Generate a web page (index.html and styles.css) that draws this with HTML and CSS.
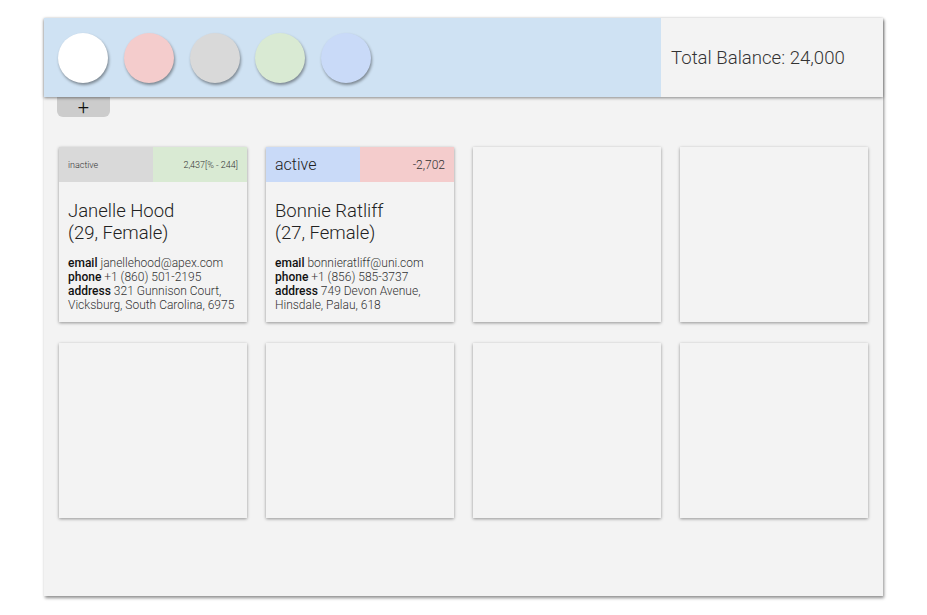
FILE: index.html
```html
<!DOCTYPE html>
<html>
<head>
<meta charset="utf-8">
<link rel="stylesheet" href="styles.css">
</head>
<body>
<div class="app">
  <header class="topbar">
    <div class="swatches">
      <div class="swatch white"></div>
      <div class="swatch red"></div>
      <div class="swatch gray"></div>
      <div class="swatch green"></div>
      <div class="swatch blue"></div>
    </div>
    <div class="total">Total Balance: 24,000</div>
  </header>
  <div class="addrow"><button class="add">+</button></div>
  <main class="grid">
    <div class="card">
      <div class="card-head">
        <div class="status gray small">inactive</div>
        <div class="bal green small">2,437[% - 244]</div>
      </div>
      <div class="card-body">
        <div class="name">Janelle Hood<br>(29, Female)</div>
        <div class="details">
          <b>email</b> janellehood@apex.com<br>
          <b>phone</b> +1 (860) 501-2195<br>
          <b>address</b> 321 Gunnison Court, Vicksburg, South Carolina, 6975
        </div>
      </div>
    </div>
    <div class="card">
      <div class="card-head">
        <div class="status blue big">active</div>
        <div class="bal red mid">-2,702</div>
      </div>
      <div class="card-body">
        <div class="name">Bonnie Ratliff<br>(27, Female)</div>
        <div class="details">
          <b>email</b> bonnieratliff@uni.com<br>
          <b>phone</b> +1 (856) 585-3737<br>
          <b>address</b> 749 Devon Avenue, Hinsdale, Palau, 618
        </div>
      </div>
    </div>
    <div class="card"></div>
    <div class="card"></div>
    <div class="card"></div>
    <div class="card"></div>
    <div class="card"></div>
    <div class="card"></div>
  </main>
</div>
</body>
</html>
```
FILE: styles.css
```css
html, body {
  margin: 0;
  padding: 0;
  background: #ffffff;
  font-family: Roboto, "Liberation Sans", sans-serif;
  font-weight: 300;
  color: #222;
}
body {
  padding: 18px 44px 19px 44px;
}
.app {
  height: 578px;
  background: #f3f3f3;
  box-shadow: 1px 2px 3px rgba(0,0,0,0.45);
  display: flex;
  flex-direction: column;
}
.topbar {
  height: 79px;
  flex: none;
  display: flex;
  box-shadow: 0 1px 3px rgba(0,0,0,0.45);
  position: relative;
  z-index: 1;
}
.swatches {
  width: 617px;
  background: #cfe2f3;
  display: flex;
  gap: 15.75px;
  padding: 15px 0 0 14px;
  box-sizing: border-box;
}
.swatch {
  width: 50px;
  height: 50px;
  border-radius: 50%;
  box-shadow: 1px 2px 3px rgba(0,0,0,0.4);
}
.white { background: #ffffff; }
.red { background: #f4cccc; }
.gray { background: #d9d9d9; }
.green { background: #d9ead3; }
.blue { background: #c9daf8; }
.total {
  flex: 1;
  background: #f3f3f3;
  display: flex;
  align-items: center;
  padding-left: 10px;
  padding-top: 1px;
  font-size: 18.6px;
  color: #333;
}
.addrow {
  padding-left: 13px;
  height: 50px;
  flex: none;
}
.add {
  width: 53px;
  height: 20px;
  border: none;
  background: #cccccc;
  border-radius: 0 0 6px 6px;
  font-family: Roboto, "Liberation Sans", sans-serif;
  font-weight: 300;
  font-size: 20px;
  line-height: 16px;
  color: #111;
  padding: 0;
  display: block;
}
.grid {
  display: grid;
  grid-template-columns: repeat(4, 188px);
  grid-auto-rows: 175px;
  column-gap: 19px;
  row-gap: 21px;
  padding-left: 15px;
}
.card {
  background: #f3f3f3;
  box-shadow: 0 1px 3px rgba(0,0,0,0.4);
  display: flex;
  flex-direction: column;
}
.card-head {
  height: 35px;
  display: flex;
}
.status, .bal {
  width: 50%;
  display: flex;
  align-items: center;
  box-sizing: border-box;
}
.status { padding-left: 9px; }
.bal { justify-content: flex-end; padding-right: 9px; }
.small { font-size: 9px; color: #333; }
.mid { font-size: 12px; color: #333; }
.big { font-size: 16px; color: #222; }
.card-body {
  padding: 18px 9px 0 9px;
}
.name {
  font-size: 18.5px;
  line-height: 22px;
  color: #222;
}
.details {
  margin-top: 12px;
  font-size: 12px;
  line-height: 14px;
  color: #333;
}
.details b {
  font-weight: 500;
  color: #111;
}
```
